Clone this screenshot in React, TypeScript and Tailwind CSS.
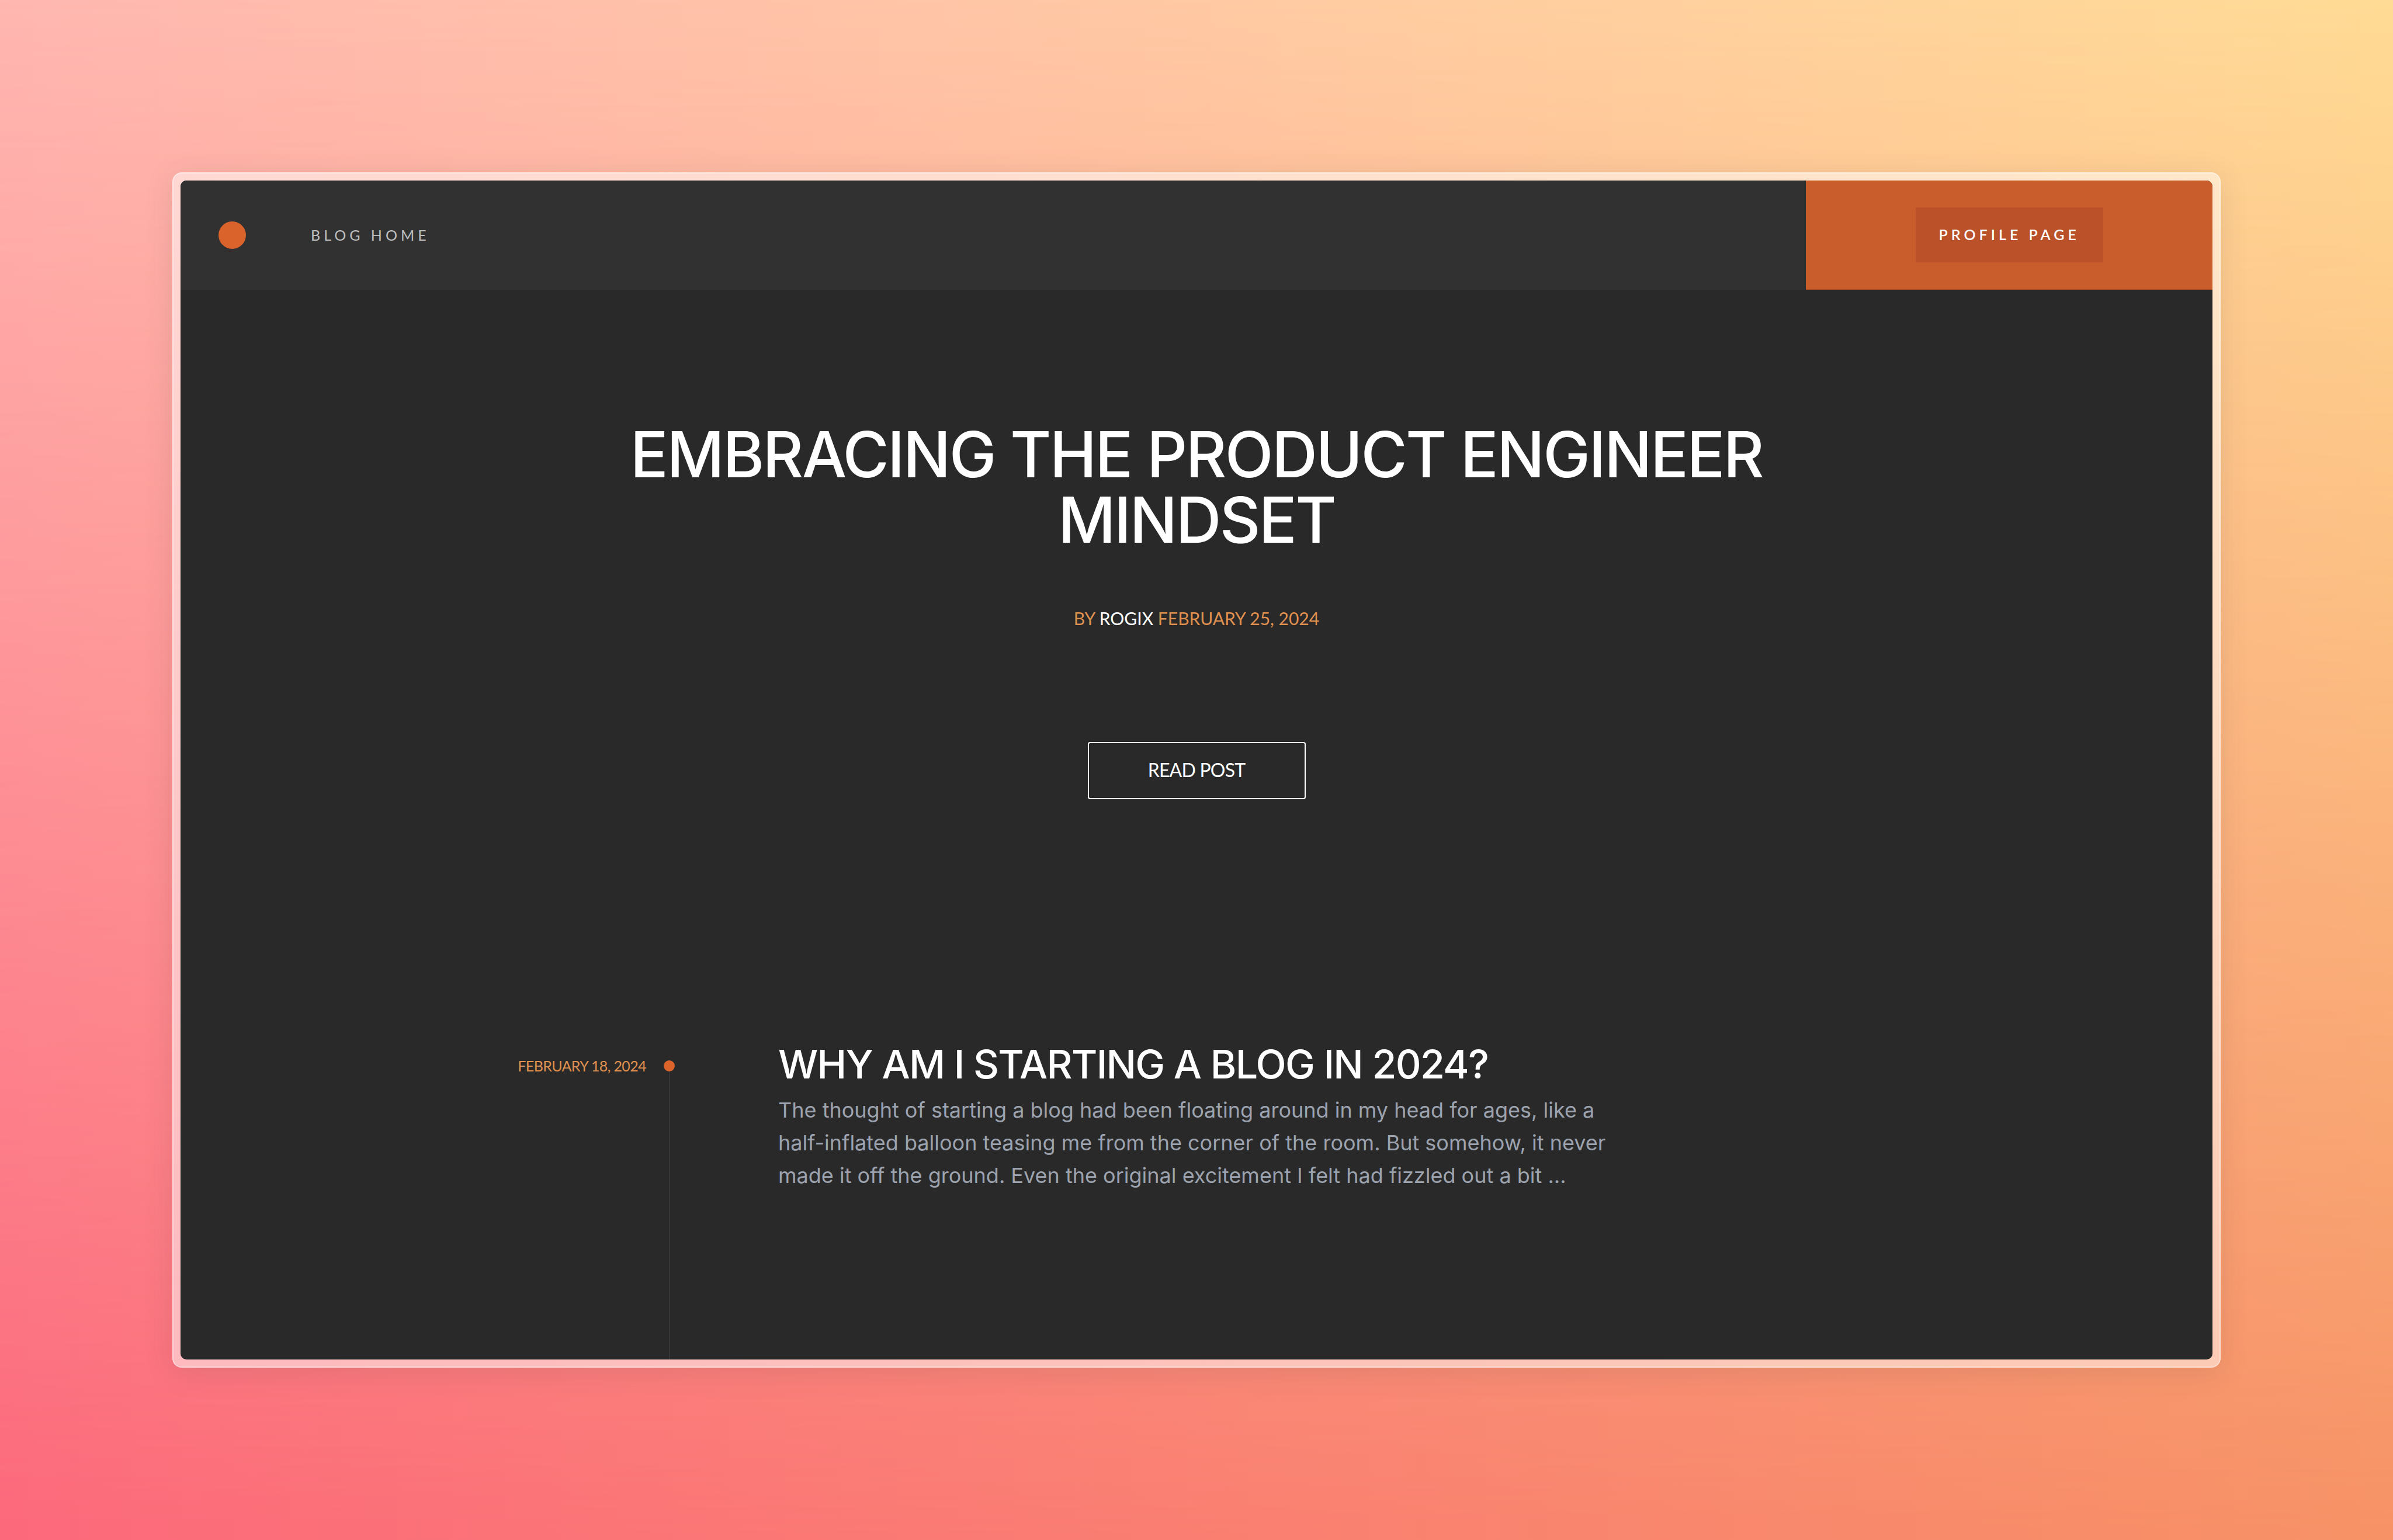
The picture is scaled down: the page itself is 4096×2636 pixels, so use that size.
type Post = { date: string; title: string; excerpt: string };

const posts: Post[] = [
  {
    date: "February 18, 2024",
    title: "Why am I starting a blog in 2024?",
    excerpt:
      "The thought of starting a blog had been floating around in my head for ages, like a half-inflated balloon teasing me from the corner of the room. But somehow, it never made it off the ground. Even the original excitement I felt had fizzled out a bit ...",
  },
];

function Header() {
  return (
    <header className="grid h-[187px] shrink-0 grid-cols-5 font-['Lato',sans-serif] text-[25px] tracking-[6px] uppercase">
      <nav className="col-span-4 flex items-center gap-[111px] bg-[#313131] pl-[65px]">
        <a href="#" aria-label="Home" className="size-[47px] rounded-full bg-[#d9632b]" />
        <a href="#blog" className="text-[#bfbfbf]">
          Blog home
        </a>
      </nav>
      <div className="flex items-center justify-center border-b border-[#a94d27] bg-[#c95d2c]">
        <a
          href="#profile"
          className="flex h-[94px] items-center bg-[#bb5128] px-[40px] font-semibold text-white"
        >
          Profile page
        </a>
      </div>
    </header>
  );
}

function Hero() {
  return (
    <section className="flex flex-col items-center pt-[226px] text-center uppercase">
      <h1 className="max-w-[2060px] font-['Inter',sans-serif] text-[108px] leading-[112px] font-[450] tracking-tight">
        Embracing the product engineer mindset
      </h1>
      <p className="mt-[90px] font-['Lato',sans-serif] text-[30px] leading-[45px] text-[#e0914f]">
        By <span className="text-white">Rogix</span> February 25, 2024
      </p>
      <button
        type="button"
        className="mt-[189px] h-[98px] w-[373px] rounded-[4px] border-2 border-white pb-[2px] font-['Lato',sans-serif] text-[32px] tracking-tight uppercase"
      >
        Read post
      </button>
    </section>
  );
}

function PostRow({ post }: { post: Post }) {
  return (
    <article className="grid flex-1 grid-cols-[223px_19px_1fr]">
      <time className="pt-[23px] text-right font-['Lato',sans-serif] text-[25px] leading-[40px] tracking-tight whitespace-nowrap text-[#e0914f] uppercase">
        {post.date}
      </time>
      <div className="ml-[30px] flex w-[19px] flex-col items-center pt-[34px]">
        <span className="size-[19px] shrink-0 rounded-full bg-[#dc642b]" />
        <span className="w-[2px] flex-1 bg-[#353535]" />
      </div>
      <div className="max-w-[1660px] pl-[207px] font-['Inter',sans-serif]">
        <h2 className="text-[68px] leading-[80px] font-[450] tracking-tight uppercase">
          {post.title}
        </h2>
        <p className="mt-[11px] text-[36px] leading-[56px] text-[#9ca3af]">{post.excerpt}</p>
      </div>
    </article>
  );
}

export default function App() {
  return (
    <div className="relative isolate flex min-h-screen bg-linear-to-r from-[#fc697b] to-[#f79266] p-[295px]">
      <div className="absolute inset-0 -z-10 bg-linear-to-r from-[#ffb7b0] to-[#ffdb95] mask-b-from-0% mask-b-to-100%" />
      <div className="flex flex-1 rounded-[16px] border-2 border-white/70 bg-white/50 bg-clip-padding p-[12px] shadow-[0_8px_50px_rgba(60,60,60,0.13)]">
        <div className="flex flex-1 flex-col overflow-hidden rounded-[10px] bg-[#292929] text-white">
          <Header />
          <main className="flex flex-1 flex-col">
            <Hero />
            <section className="mx-auto mt-[413px] flex w-full max-w-[2330px] flex-1 flex-col">
              {posts.map((post) => (
                <PostRow key={post.title} post={post} />
              ))}
            </section>
          </main>
        </div>
      </div>
    </div>
  );
}
